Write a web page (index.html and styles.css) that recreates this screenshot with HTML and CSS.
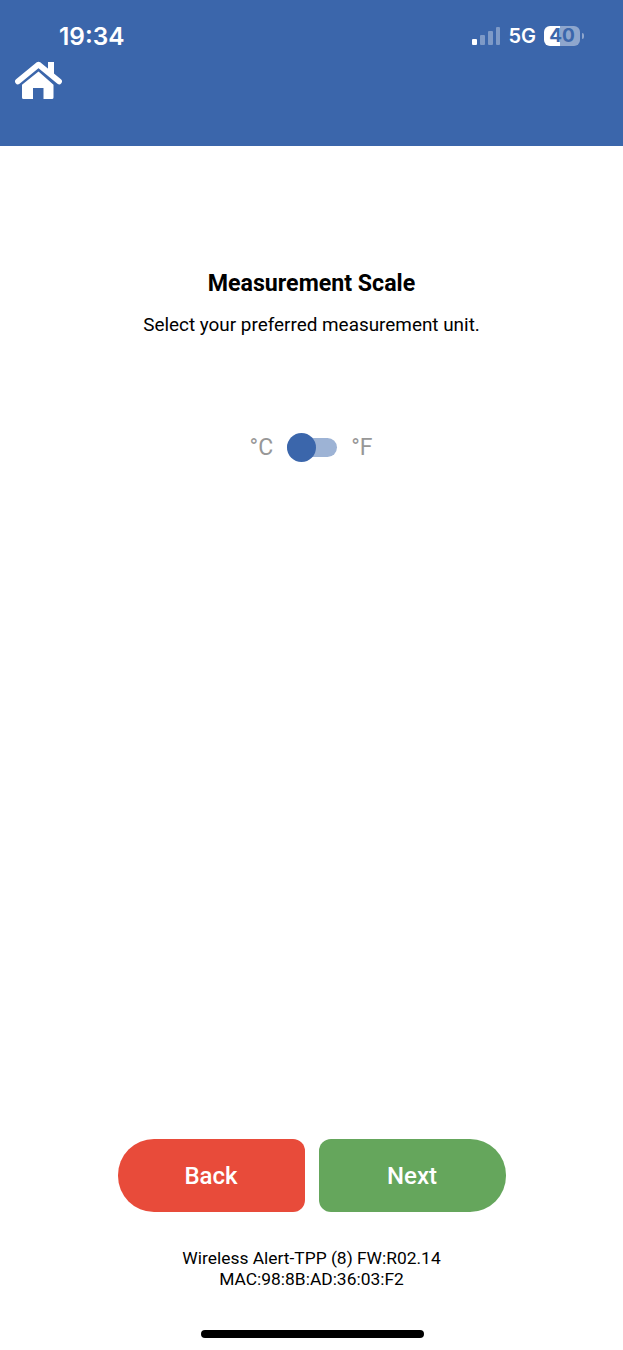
FILE: index.html
```html
<html>
    <head>
        <title>Measurement Scale</title>
        <link rel="stylesheet" href="styles.css">
    </head>
    <body>
        <div class="page">
            <div class="header">
                <div class="status-bar">
                    <span class="time">19:34</span>
                    <div class="status-icons">
                        <div class="signal">
                            <span class="bar bar-1 on"></span>
                            <span class="bar bar-2"></span>
                            <span class="bar bar-3"></span>
                            <span class="bar bar-4"></span>
                        </div>
                        <span class="network">5G</span>
                        <div class="battery">
                            <div class="battery-body">40</div>
                            <div class="battery-cap"></div>
                        </div>
                    </div>
                </div>
                <svg class="home-icon" viewBox="0 0 47 38" width="47" height="38">
                    <path fill="#fff" d="M33 1h6v13l-6-5z"/>
                    <path fill="none" stroke="#fff" stroke-width="5.500" stroke-linecap="round" stroke-linejoin="round" d="M2.800 20.500L23.500 3.500L44.200 20.500"/>
                    <path fill="#fff" d="M23.500 10.500L7 23.800V36.500a1.500 1.500 0 0 0 1.500 1.500H18V27h10.500V38H37a1.500 1.500 0 0 0 1.500-1.500V23.800z"/>
                </svg>
            </div>

            <div class="content">
                <h1 class="title">Measurement Scale</h1>
                <p class="subtitle">Select your preferred measurement unit.</p>
                <div class="scale-row">
                    <span class="unit">°C</span>
                    <div class="toggle">
                        <div class="toggle-knob"></div>
                    </div>
                    <span class="unit">°F</span>
                </div>
            </div>

            <div class="buttons">
                <button class="btn btn-back">Back</button>
                <button class="btn btn-next">Next</button>
            </div>

            <div class="device-info">
                Wireless Alert-TPP (8) FW:R02.14<br />
                MAC:98:8B:AD:36:03:F2
            </div>

            <div class="home-bar"></div>
        </div>
    </body>
</html>
```

FILE: styles.css
```css
body {
    margin: 0;
    font-family: Roboto, sans-serif;
    background-color: #fff;
}

.page {
    width: 623px;
    height: 1350px;
    display: flex;
    flex-direction: column;
    align-items: center;
    overflow: hidden;
}

.header {
    width: 100%;
    height: 146px;
    box-sizing: border-box;
    padding: 21px 39px 0 15px;
    background-color: #3b66ab;
}

.status-bar {
    display: flex;
    justify-content: space-between;
    align-items: center;
    height: 30px;
    padding-left: 44px;
}

.time {
    color: #fff;
    font-family: Inter, sans-serif;
    font-size: 24.4px;
    font-weight: 600;
}

.status-icons {
    display: flex;
    align-items: center;
}

.signal {
    display: flex;
    align-items: flex-end;
    gap: 3px;
    height: 18px;
    margin-right: 8px;
}

.bar {
    width: 4.75px;
    border-radius: 1px;
    background-color: #7e9ac7;
}

.bar.on {
    background-color: #fff;
}

.bar-1 { height: 6px; }
.bar-2 { height: 10px; }
.bar-3 { height: 14px; }
.bar-4 { height: 18px; }

.network {
    color: #fff;
    font-family: Inter, sans-serif;
    font-size: 20px;
    font-weight: 600;
    margin-right: 8px;
}

.battery {
    display: flex;
    align-items: center;
    gap: 2px;
}

.battery-body {
    width: 36px;
    height: 20px;
    border-radius: 6px;
    background: linear-gradient(to right, #fff 45%, #8ea6cd 45%);
    color: #3b66ab;
    font-family: Inter, sans-serif;
    font-size: 19px;
    font-weight: 700;
    line-height: 20px;
    text-align: center;
}

.battery-cap {
    width: 2px;
    height: 6px;
    border-radius: 0 2px 2px 0;
    background-color: #8ea6cd;
}

.home-icon {
    display: block;
    margin-top: 10px;
}

.content {
    flex: 1;
    display: flex;
    flex-direction: column;
    align-items: center;
}

.title {
    margin: 123px 0 0 0;
    font-size: 23.2px;
    line-height: 28px;
    font-weight: 700;
    color: #000;
}

.subtitle {
    margin: 16px 0 0 0;
    font-size: 18.9px;
    line-height: 24px;
    color: #000;
}

.scale-row {
    display: flex;
    align-items: center;
    gap: 14px;
    margin-top: 95px;
    margin-right: 1px;
    height: 30px;
}

.unit {
    font-size: 23px;
    color: #979797;
}

.toggle {
    position: relative;
    width: 50px;
    height: 19px;
    border-radius: 10px;
    background-color: #9db3d5;
}

.toggle-knob {
    position: absolute;
    top: -5px;
    left: 0;
    width: 29px;
    height: 29px;
    border-radius: 50%;
    background-color: #3b66ab;
}

.buttons {
    display: flex;
    gap: 14px;
}

.btn {
    width: 187px;
    height: 73px;
    border: none;
    color: #fff;
    font-family: Roboto, sans-serif;
    font-size: 24px;
    font-weight: 500;
}

.btn-back {
    background-color: #e84b3a;
    border-radius: 36px 12px 12px 36px;
}

.btn-next {
    background-color: #65a65c;
    border-radius: 12px 36px 36px 12px;
}

.device-info {
    margin-top: 36px;
    font-size: 17.4px;
    line-height: 21px;
    text-align: center;
    color: #000;
}

.home-bar {
    width: 223px;
    height: 8px;
    margin-top: 40px;
    margin-bottom: 12px;
    margin-left: 1px;
    border-radius: 4px;
    background-color: #000;
}
```
